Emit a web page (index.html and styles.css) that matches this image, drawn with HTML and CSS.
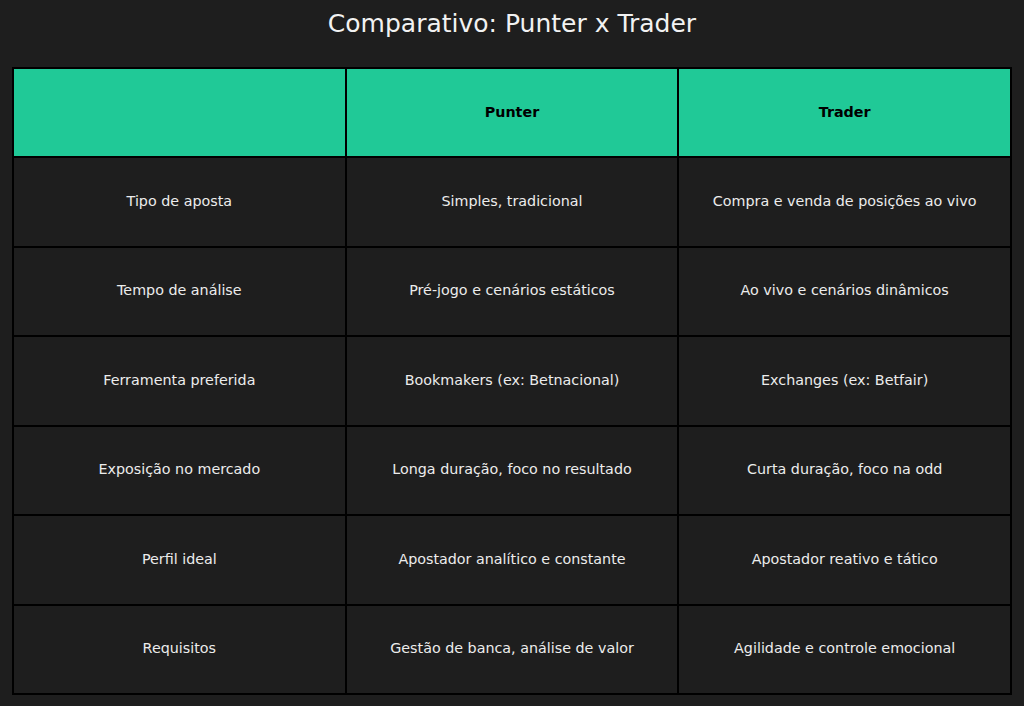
FILE: index.html
```html
<!DOCTYPE html>
<html lang="pt">
<head>
<meta charset="utf-8">
<title>Comparativo: Punter x Trader</title>
<link rel="stylesheet" href="styles.css">
</head>
<body>
<div class="page">
  <h1 class="title">Comparativo: Punter x Trader</h1>
  <table class="cmp">
    <thead>
      <tr><th></th><th>Punter</th><th>Trader</th></tr>
    </thead>
    <tbody>
      <tr><td>Tipo de aposta</td><td>Simples, tradicional</td><td>Compra e venda de posições ao vivo</td></tr>
      <tr><td>Tempo de análise</td><td>Pré-jogo e cenários estáticos</td><td>Ao vivo e cenários dinâmicos</td></tr>
      <tr><td>Ferramenta preferida</td><td>Bookmakers (ex: Betnacional)</td><td>Exchanges (ex: Betfair)</td></tr>
      <tr><td>Exposição no mercado</td><td>Longa duração, foco no resultado</td><td>Curta duração, foco na odd</td></tr>
      <tr><td>Perfil ideal</td><td>Apostador analítico e constante</td><td>Apostador reativo e tático</td></tr>
      <tr><td>Requisitos</td><td>Gestão de banca, análise de valor</td><td>Agilidade e controle emocional</td></tr>
    </tbody>
  </table>
</div>
</body>
</html>
```
FILE: styles.css
```css
html, body {
  margin: 0;
  padding: 0;
  background: #1e1e1e;
}
body {
  font-family: "DejaVu Sans", sans-serif;
  width: 1024px;
  height: 706px;
  overflow: hidden;
}
.page {
  padding: 0 12px 0 12px;
}
.title {
  margin: 0;
  height: 67px;
  padding-top: 6px;
  box-sizing: border-box;
  text-align: center;
  font-weight: normal;
  font-size: 25px;
  line-height: 35px;
  color: #f2f2f2;
}
.cmp {
  width: 1000px;
  border-collapse: collapse;
  table-layout: fixed;
}
.cmp th, .cmp td {
  border: 2px solid #000;
  text-align: center;
  vertical-align: middle;
  padding: 0;
  font-size: 14.3px;
}
.cmp th {
  background: #20c997;
  color: #000;
  font-weight: bold;
  height: 86px;
  padding-bottom: 1px;
}
.cmp td {
  background: #1e1e1e;
  color: #ececec;
  height: 85.5px;
  padding-bottom: 2px;
}
```
